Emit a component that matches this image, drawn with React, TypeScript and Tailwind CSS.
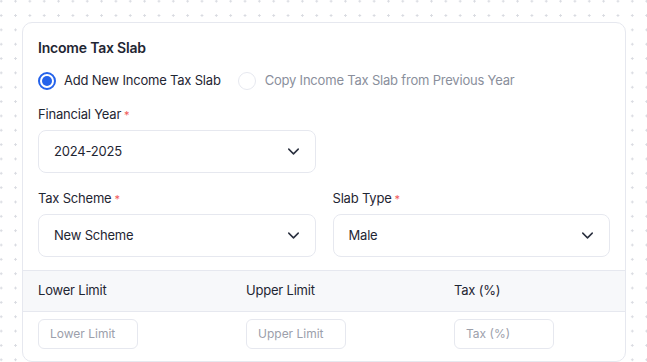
import React from 'react';
import { ChevronDown } from 'lucide-react';

const Label = ({ text }: { text: string }) => (
  <div className="h-5 text-[13px] leading-5 tracking-[-0.2px] text-[#1f2633]">
    {text}
    <span className="ml-[3px] text-[11px] text-[#f05a5a]">*</span>
  </div>
);

const Select = ({ value }: { value: string }) => (
  <div className="mt-[6px] h-[43px] flex items-center justify-between pl-[15px] pr-[12px] border border-[#e6e8ef] rounded-[8px] bg-white">
    <span className="text-[13px] tracking-[-0.2px] text-[#1f2633]">{value}</span>
    <ChevronDown size={19} strokeWidth={1.9} className="text-[#2b3140]" />
  </div>
);

export default function App() {
  return (
    <div className="min-h-[362px] w-[647px] overflow-hidden bg-white bg-[radial-gradient(circle,#d9dbe1_1px,transparent_1.3px)] bg-[length:14.35px_14.35px] bg-[position:-6px_-6px] pt-[22px] pl-[22px] font-['Inter',sans-serif]">
      <div className="w-[604px] bg-white border border-[#e6e8ef] rounded-[10px] overflow-hidden">
        <div className="px-[15px] pt-[15px]">
          <h3 className="text-[14px] leading-5 font-semibold tracking-[-0.2px] text-[#1f2633]">Income Tax Slab</h3>

          <div className="mt-[14px] flex items-center h-[18px]">
            <span className="w-[18px] h-[18px] rounded-full border-2 border-[#2563eb] flex items-center justify-center">
              <span className="w-[10px] h-[10px] rounded-full bg-[#2563eb]" />
            </span>
            <span className="ml-[8px] text-[13px] tracking-[-0.2px] text-[#1f2633]">Add New Income Tax Slab</span>
            <span className="ml-[17px] w-[18px] h-[18px] rounded-full border border-[#e6e8ef] bg-white" />
            <span className="ml-[9px] text-[13px] tracking-[-0.2px] text-[#8a8f9c]">Copy Income Tax Slab from Previous Year</span>
          </div>

          <div className="mt-[14px] grid grid-cols-2 gap-x-[17px]">
            <div>
              <Label text="Financial Year" />
              <Select value="2024-2025" />
            </div>
          </div>

          <div className="mt-[15px] grid grid-cols-2 gap-x-[17px]">
            <div>
              <Label text="Tax Scheme" />
              <Select value="New Scheme" />
            </div>
            <div>
              <Label text="Slab Type" />
              <Select value="Male" />
            </div>
          </div>
        </div>

        <div className="mt-[13px] h-[42px] bg-[#f7f8fa] border-y border-[#e6e8ef] grid grid-cols-[208px_208px_208px] px-[15px] items-center text-[13px] tracking-[-0.2px] text-[#1f2633]">
          <div>Lower Limit</div>
          <div>Upper Limit</div>
          <div>Tax (%)</div>
        </div>

        <div className="grid grid-cols-[208px_208px_208px] px-[15px] pt-[7px] pb-[12px]">
          {['Lower Limit', 'Upper Limit', 'Tax (%)'].map((p) => (
            <div key={p}>
              <div className="w-[100px] h-[30px] border border-[#e6e8ef] rounded-[6px] flex items-center px-[11px] text-[12px] text-[#9ca0ab]">
                {p}
              </div>
            </div>
          ))}
        </div>
      </div>
    </div>
  );
}
